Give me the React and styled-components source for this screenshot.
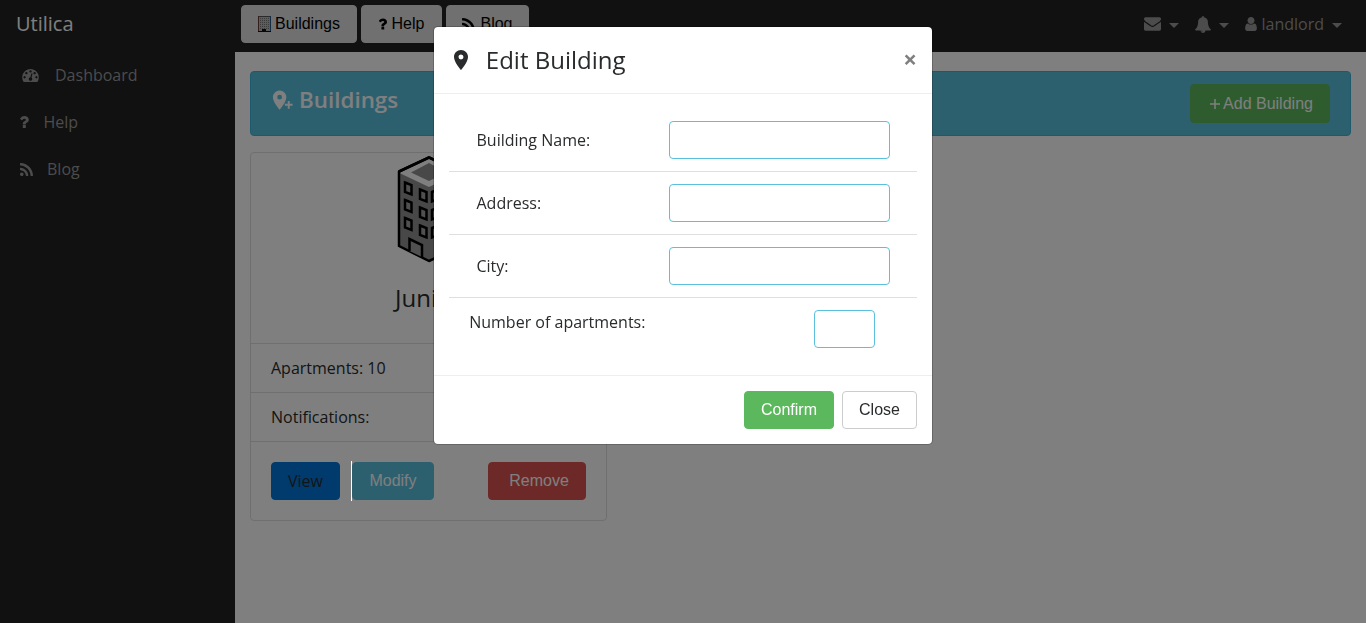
import React from "react";
import styled, { createGlobalStyle } from "styled-components";

const Global = createGlobalStyle`
  * { box-sizing: border-box; }
  body { margin: 0; overflow: hidden; background: #fff; color: #292b2c;
    font: 16px/24px "Open Sans", sans-serif; }
  h1, h3, h4, p { margin: 0; font-weight: 400; }
`;

const Page = styled.div`display: flex; flex-direction: column; height: 100vh;`;
const Navbar = styled.header`
  display: flex; flex: none; height: 52px; padding-right: 24px; background: #222;
`;
const Brand = styled.div`
  width: 241px; padding: 9px 16px 0; font-size: 20px; line-height: 30px; color: #fff;
`;
const NavButtons = styled.nav`display: flex; flex: 1; gap: 4px; padding-top: 5px;`;
const Columns = styled.div`display: flex; flex: 1; min-height: 0;`;
const Sidebar = styled.aside`
  display: flex; flex-direction: column; gap: 23px; width: 235px; padding: 11px 20px; background: #222;
`;
const SideLink = styled.a`
  display: flex; align-items: center; height: 24px; gap: ${p => p.$gap}px;
  padding-left: ${p => p.$indent || 0}px; color: #999;
`;
const UserMenu = styled.div`display: flex; align-items: center; gap: 16px; height: 48px; color: #999;`;
const MenuItem = styled.div`display: flex; align-items: center; gap: ${p => p.$gap || 8}px;`;
const Caret = styled.i`
  width: 0; border: 5px solid transparent; border-top-color: currentColor; border-bottom: 0;
  margin: 3px 0 0 ${p => p.$left || 0}px;
`;
const Button = styled.button`
  display: inline-flex; align-items: center; justify-content: center; flex: none;
  height: ${p => p.$height || 38}px; width: ${p => p.$width}px;
  padding: 0 0 0 ${p => p.$shift || 0}px;
  gap: ${p => p.$gap || 0}px; white-space: nowrap;
  border: 1px solid ${p => p.$border || p.$bg}; border-radius: 4px;
  background: ${p => p.$bg}; color: ${p => p.$color || "#fff"};
  font: 16px/20px ${p => (p.$open ? '"Open Sans"' : '"Liberation Sans"')}, sans-serif;
`;
const Main = styled.main`flex: 1; padding: 19px 15px 0;`;
const Alert = styled.section`
  display: flex; justify-content: space-between; height: 65px; padding: 12px 20px 0 20px;
  border: 1px solid #3db5d8; border-radius: 4px; background: #5bc0de;
`;
const AlertTitle = styled.h1`
  display: flex; align-items: center; gap: 5px; height: 32px;
  font-size: 22.4px; font-weight: 600; color: #fff;
`;
const Card = styled.article`
  width: 357px; margin-top: 16px; border: 1px solid #dfdfdf; border-radius: 4px;
`;
const CardTop = styled.div`
  display: flex; flex-direction: column; align-items: center; height: 190px; padding-top: 2px;
`;
const CardName = styled.h4`margin-top: 18px; font-size: 24px; line-height: 32px; width: 67px; white-space: nowrap;`;
const CardRow = styled.p`height: 49px; padding: 12px 20px; border-top: 1px solid #dfdfdf;`;
const CardActions = styled.div`
  display: flex; height: 79px; padding: 20px 20px 0; border-top: 1px solid #dfdfdf;
`;
const Divider = styled.span`
  position: relative; z-index: 20; flex: none; width: 1px; height: 40px; margin: -1px 0 0 11px; background: #fff;
`;
const Spacer = styled.span`flex: 1;`;
const Overlay = styled.div`
  position: fixed; inset: 0; z-index: 10; display: flex; justify-content: center; align-items: flex-start;
  padding-top: 26px; background: rgba(0, 0, 0, 0.5);
`;
const Dialog = styled.div`
  width: 500px; border: 1px solid rgba(0, 0, 0, 0.2); border-radius: 5px;
  background: #fff; background-clip: padding-box;
`;
const DialogHeader = styled.header`
  display: flex; align-items: center; height: 67px; padding: 0 15px 0 15px; border-bottom: 1px solid #eceeef;
`;
const DialogTitle = styled.h3`flex: 1; margin-left: 12.8px; font-size: 24px; line-height: 36px;`;
const Close = styled.button`
  padding: 0 0 2px; border: 0; background: none; color: #808080;
  font: 700 24px/24px "Open Sans", sans-serif;
`;
const DialogBody = styled.form`padding: 15px;`;
const Field = styled.label`
  display: flex; justify-content: space-between; align-items: ${p => (p.$top ? "flex-start" : "center")};
  padding: 12px ${p => (p.$top ? 42 : 27)}px 12px ${p => (p.$top ? 20.2 : 27.5)}px;
  & + & { border-top: 1px solid #dfdfdf; }
`;
const Input = styled.input`
  width: ${p => p.$width}px; height: 38px; border: 1px solid #5bc0de; border-radius: 4px; background: #fff;
`;
const DialogFooter = styled.footer`
  display: flex; justify-content: flex-end; gap: 8px; padding: 15px; border-top: 1px solid #eceeef;
`;

const ICONS = {
  rss: ["0 128 1408 1408", "M384 1344q0 80-56 136t-136 56-136-56-56-136 56-136 136-56 136 56 56 136zm512 123q2 28-17 48-18 21-47 21h-135q-25 0-43-16.5t-20-41.5q-22-229-184.5-391.5t-391.5-184.5q-25-2-41.5-20t-16.5-43v-135q0-29 21-47 17-17 43-17h5q160 13 306 80.5t259 181.5q114 113 181.5 259t80.5 306zm512 2q2 27-18 47-18 20-46 20h-143q-26 0-44.5-17.5t-19.5-42.5q-12-215-101-408.5t-231.5-336-336-231.5-408.5-102q-25-1-42.5-19.5t-17.5-43.5v-143q0-28 20-46 18-18 44-18h3q262 13 501.5 120t425.5 294q187 186 294 425.5t120 501.5z"],
  user: ["0 128 1280 1536", "M1280 1399q0 109-62.5 187t-150.5 78h-854q-88 0-150.5-78t-62.5-187q0-85 8.5-160.5t31.5-152 58.5-131 94-89 134.5-34.5q131 128 313 128t313-128q76 0 134.5 34.5t94 89 58.5 131 31.5 152 8.5 160.5zm-256-887q0 159-112.5 271.5t-271.5 112.5-271.5-112.5-112.5-271.5 112.5-271.5 271.5-112.5 271.5 112.5 112.5 271.5z"],
  mail: ["0 256 1792 1408", "M1792 710v794q0 66-47 113t-113 47h-1472q-66 0-113-47t-47-113v-794q44 49 101 87 362 246 497 345 57 42 92.5 65.5t94.5 48 110 24.5h2q51 0 110-24.5t94.5-48 92.5-65.5q170-123 498-345 57-39 100-87zm0-294q0 79-49 151t-122 123q-376 261-468 325-10 7-42.5 31t-54 38.5-52 32.5-57.5 27-50 9h-2q-23 0-50-9t-57.5-27-52-32.5-54-38.5-42.5-31q-91-64-262-182.5t-205-142.5q-62-42-117-115.5t-55-136.5q0-78 41.5-130t118.5-52h1472q65 0 112.5 47t47.5 113z"],
  bell: ["64 0 1664 1792", "M912 1696q0-16-16-16-59 0-101.5-42.5t-42.5-101.5q0-16-16-16t-16 16q0 73 51.5 124.5t124.5 51.5q16 0 16-16zm816-288q0 52-38 90t-90 38h-448q0 106-75 181t-181 75-181-75-75-181h-448q-52 0-90-38t-38-90q50-42 91-88t85-119.5 74.5-158.5 50-206 19.5-260q0-152 117-282.5t307-158.5q-8-19-8-39 0-40 28-68t68-28 68 28 28 68q0 20-8 39 190 28 307 158.5t117 282.5q0 139 19.5 260t50 206 74.5 158.5 85 119.5 91 88z"],
  gauge: ["0 256 1792 1408", "M384 1152q0-53-37.5-90.5t-90.5-37.5-90.5 37.5-37.5 90.5 37.5 90.5 90.5 37.5 90.5-37.5 37.5-90.5zm192-448q0-53-37.5-90.5t-90.5-37.5-90.5 37.5-37.5 90.5 37.5 90.5 90.5 37.5 90.5-37.5 37.5-90.5zm428 481l101-382q6-26-7.5-48.5t-38.5-29.5-48 6.5-30 39.5l-101 382q-60 5-107 43.5t-63 98.5q-20 77 20 146t117 89 146-20 89-117q16-60-6-117t-72-91zm660-33q0-53-37.5-90.5t-90.5-37.5-90.5 37.5-37.5 90.5 37.5 90.5 90.5 37.5 90.5-37.5 37.5-90.5zm-640-640q0-53-37.5-90.5t-90.5-37.5-90.5 37.5-37.5 90.5 37.5 90.5 90.5 37.5 90.5-37.5 37.5-90.5zm448 192q0-53-37.5-90.5t-90.5-37.5-90.5 37.5-37.5 90.5 37.5 90.5 90.5 37.5 90.5-37.5 37.5-90.5zm320 448q0 261-141 483-19 29-54 29h-1402q-35 0-54-29-141-221-141-483 0-182 71-348t191-286 286-191 348-71 348 71 286 191 191 286 71 348z"],
  question: ["109 256 911 1280", "M704 1256v240q0 16-12 28t-28 12h-240q-16 0-28-12t-12-28v-240q0-16 12-28t28-12h240q16 0 28 12t12 28zm316-600q0 54-15.5 101t-35 76.5-55 59.5-57.5 43.5-61 35.5q-41 23-68.5 65t-27.5 67q0 17-12 32.5t-28 15.5h-240q-15 0-25.5-18.5t-10.5-37.5v-45q0-83 65-156.5t143-108.5q59-27 84-56t25-76q0-42-46.5-74t-107.5-32q-65 0-108 29-35 25-107 115-13 16-31 16-12 0-25-8l-164-125q-13-10-15.5-25t5.5-28q160-266 464-266 80 0 161 31t146 83 106 127.5 41 158.5z"],
  pin: ["0 0 24 24", "M12 2C8.13 2 5 5.13 5 9c0 5.25 7 13 7 13s7-7.75 7-13c0-3.87-3.13-7-7-7zm0 9.5a2.5 2.5 0 0 1 0-5 2.5 2.5 0 0 1 0 5z"],
  pinPlus: ["0 0 24 24", "M9 11.5A2.5 2.5 0 0 0 11.5 9 2.5 2.5 0 0 0 9 6.5 2.5 2.5 0 0 0 6.5 9 2.5 2.5 0 0 0 9 11.5M9 2c3.86 0 7 3.13 7 7 0 5.25-7 13-7 13S2 14.25 2 9a7 7 0 0 1 7-7m5.500 14h3v-3h2v3h3v2h-3v3h-2v-3h-3z"],
};
const Icon = ({ name, w, h }) => (
  <svg width={w} height={h} viewBox={ICONS[name][0]} fill="currentColor"><path d={ICONS[name][1]} /></svg>
);

const OfficeIcon = () => (
  <svg width="13" height="17" viewBox="0 0 13 17">
    <path fill="#b8b8b8" d="M0 0h13v16H0z" />
    <path fill="none" stroke="#555" d="M0 .5h13" />
    <path fill="none" stroke="#6a3a36" d="M.5 0v16" />
    <path fill="none" stroke="#2a5a86" d="M12.500 0v16" />
    <path stroke="#777" strokeDasharray="1 1" d="M2 2.5h9M2 4.500h9M2 6.500h9M2 8.500h9M2 10.500h9M2 12.500h9" />
    <path fill="#111" d="M4 13h4v3H4zM0 15h13v1H0z" />
  </svg>
);

const windows = [[404.5, 182.5], [404.5, 200], [404.5, 218], [419.5, 189.5], [419.5, 207.5], [419.5, 225.5]];
const sideWindows = [189.5, 207.5, 225.5];
const Tower = () => (
  <svg width="64" height="109" viewBox="396.5 155 64 109" stroke="#000" strokeWidth="2.5">
    <path fill="#909090" strokeLinejoin="round" d="M398.5 171.500L428.500 157.500 458.500 171.500V247L428.500 261 398.500 246z" />
    <path fill="#fff" stroke="none" d="M400 172.500L428.500 159 457 172.500V173.500L428.500 187 400 173.500z" />
    <path fill="#909090" stroke="none" d="M410.500 172.500L428.500 163 446.500 172.500 428.500 181z" />
    <path fill="none" d="M398.500 171.500L428.500 157.500 458.500 171.500" />
    {windows.map(([x, y]) => (
      <path key={`${x}-${y}`} fill="#a0a0a0" d={`M${x} ${y}l6.500 2.500v9.500l-6.500-2.500z`} />
    ))}
    {sideWindows.map(y => <path key={y} fill="#a0a0a0" d={`M431.500 ${y + 2.5}l6.500-2.500v9.500l-6.500 2.500z`} />)}
    <path fill="#a0a0a0" d="M409 251V239l12.500 6v12" />
  </svg>
);

export default function App() {
  return (
    <Page>
      <Global />
      <Navbar>
        <Brand>Utilica</Brand>
        <NavButtons>
          <Button $width={116} $bg="#e0e0e0" $color="#000" $gap={4}><OfficeIcon />Buildings</Button>
          <Button $width={81} $bg="#e0e0e0" $color="#000" $gap={5}><Icon name="question" w={8} h={12} />Help</Button>
          <Button $width={83} $bg="#e0e0e0" $color="#000" $gap={5}><Icon name="rss" w={13} h={13} />Blog</Button>
        </NavButtons>
        <UserMenu>
          <MenuItem><Icon name="mail" w={17} h={14} /><Caret /></MenuItem>
          <MenuItem><Icon name="bell" w={16} h={17} /><Caret /></MenuItem>
          <MenuItem $gap={4}><Icon name="user" w={12} h={14} />landlord<Caret $left={4} /></MenuItem>
        </UserMenu>
      </Navbar>
      <Columns>
        <Sidebar>
          <SideLink $gap={16} $indent={2}><Icon name="gauge" w={17} h={13} />Dashboard</SideLink>
          <SideLink $gap={14.5}><Icon name="question" w={9} h={12} />Help</SideLink>
          <SideLink $gap={14}><Icon name="rss" w={13} h={13} />Blog</SideLink>
        </Sidebar>
        <Main>
          <Alert>
            <AlertTitle><Icon name="pinPlus" w={23} h={24} />Buildings</AlertTitle>
            <Button $width={140} $height={39} $bg="#5cb85c" $gap={3} $shift={3}>
              <svg width="10" height="10" viewBox="0 0 10 10" stroke="currentColor" strokeWidth="1.5"><path d="M0 5h10M5 0v10" /></svg>
              Add Building
            </Button>
          </Alert>
          <Card>
            <CardTop><Tower /><CardName>Junior</CardName></CardTop>
            <CardRow>Apartments: 10</CardRow>
            <CardRow>Notifications:</CardRow>
            <CardActions>
              <Button $width={69} $bg="#0275d8" $color="#292b2c" $open>View</Button>
              <Divider />
              <Button $width={82} $bg="#5bc0de">Modify</Button>
              <Spacer />
              <Button $width={98} $bg="#d9534f" $shift={4}>Remove</Button>
            </CardActions>
          </Card>
        </Main>
      </Columns>
      <Overlay>
        <Dialog>
          <DialogHeader>
            <Icon name="pin" w={24} h={24} />
            <DialogTitle>Edit Building</DialogTitle>
            <Close>×</Close>
          </DialogHeader>
          <DialogBody>
            <Field>Building Name:<Input $width={221} /></Field>
            <Field>Address:<Input $width={221} /></Field>
            <Field>City:<Input $width={221} /></Field>
            <Field $top>Number of apartments:<Input $width={61} /></Field>
          </DialogBody>
          <DialogFooter>
            <Button $width={90} $bg="#5cb85c">Confirm</Button>
            <Button $width={75} $bg="#fff" $border="#ccc" $color="#292b2c">Close</Button>
          </DialogFooter>
        </Dialog>
      </Overlay>
    </Page>
  );
}
